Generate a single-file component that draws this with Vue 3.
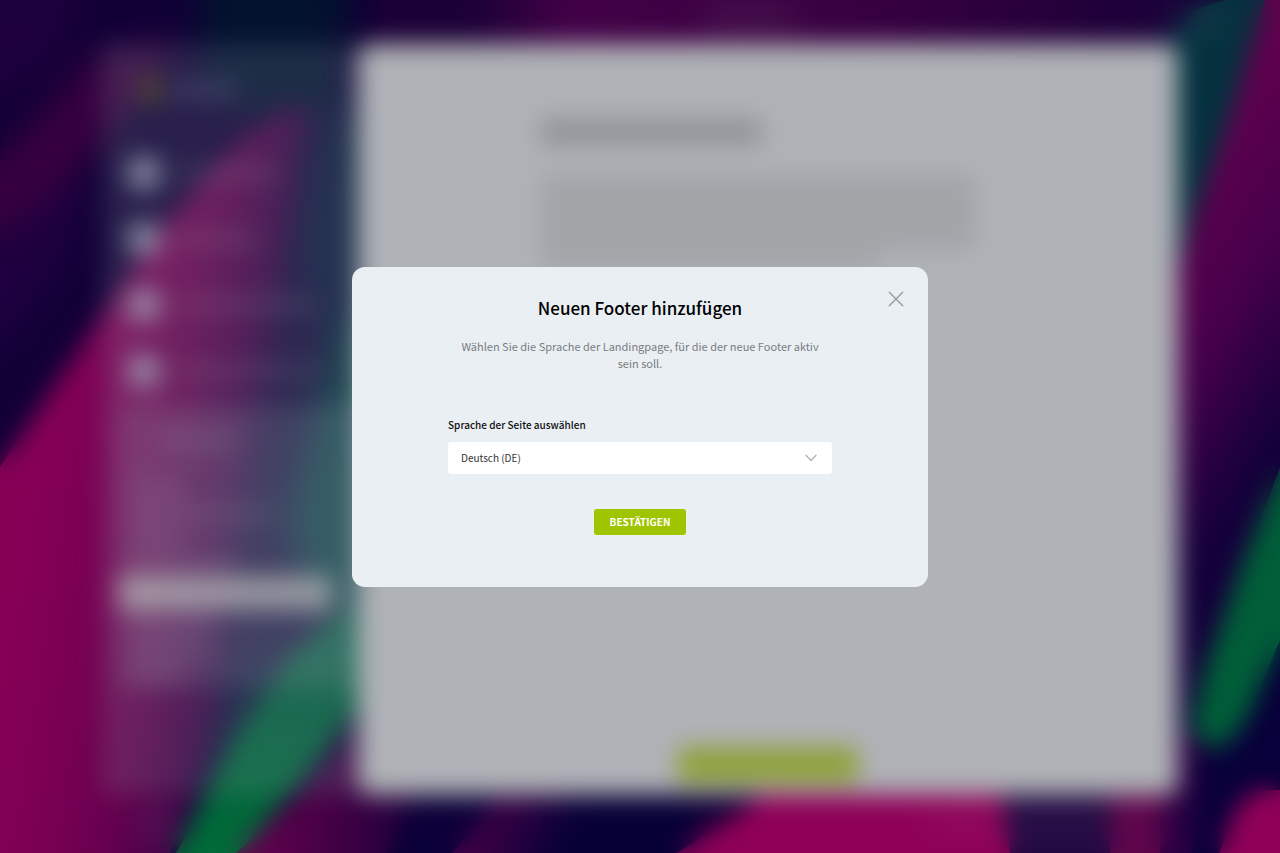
<script setup>
import { ref } from 'vue'

const language = ref('de')
const open = ref(true)

const navItems = [
  { id: 1, size: 'wide' },
  { id: 2, size: 'short' },
  { id: 3, size: 'long' },
  { id: 4, size: 'long' },
]
const subItems = [
  { id: 1, size: 'tiny' },
  { id: 2, size: 'long' },
  { id: 3, size: 'tiny' },
  { id: 4, size: 'wide' },
  { id: 5, size: 'wide', active: true },
  { id: 6, size: 'short' },
  { id: 7, size: 'short' },
  { id: 8, size: 'tiny' },
]
</script>

<template>
  <div class="page">
    <svg class="wallpaper" viewBox="0 0 1280 853" preserveAspectRatio="none" aria-hidden="true">
      <defs>
        <linearGradient id="top" x1="0" x2="1" y1="0" y2="0">
          <stop offset="0" stop-color="#1c0036" />
          <stop offset="0.14" stop-color="#420046" />
          <stop offset="0.6" stop-color="#36003f" />
          <stop offset="1" stop-color="#180038" />
        </linearGradient>
        <linearGradient id="rose" gradientUnits="userSpaceOnUse" x1="0" x2="225" y1="700" y2="734">
          <stop offset="0" stop-color="#860056" />
          <stop offset="0.35" stop-color="#760053" />
          <stop offset="0.6" stop-color="#62004d" />
          <stop offset="0.85" stop-color="#400046" />
          <stop offset="1" stop-color="#170a3c" />
        </linearGradient>
        <linearGradient id="leaf" gradientUnits="userSpaceOnUse" x1="200" x2="340" y1="850" y2="480">
          <stop offset="0" stop-color="#006c38" />
          <stop offset="0.5" stop-color="#00583c" />
          <stop offset="0.8" stop-color="#00503f" />
          <stop offset="1" stop-color="#043646" />
        </linearGradient>
        <linearGradient id="edge" gradientUnits="userSpaceOnUse" x1="1220" x2="1398" y1="130" y2="237">
          <stop offset="0" stop-color="#60004e" />
          <stop offset="0.5" stop-color="#45004a" />
          <stop offset="1" stop-color="#13003a" />
        </linearGradient>
        <linearGradient id="floor" gradientUnits="userSpaceOnUse" x1="250" x2="400" y1="0" y2="0">
          <stop offset="0" stop-color="#66004e" />
          <stop offset="1" stop-color="#26003d" />
        </linearGradient>
        <linearGradient id="stripe" gradientUnits="userSpaceOnUse" x1="480" x2="570" y1="800" y2="840">
          <stop offset="0" stop-color="#460047" />
          <stop offset="1" stop-color="#060036" />
        </linearGradient>
      </defs>
      <rect width="1280" height="853" fill="#110036" />
      <g class="soft">
        <path d="M-40 -40H100L60 60 -40 130Z" fill="#1d003c" />
        <path d="M-30 190 95 55 180 40 120 120 60 190 -30 260Z" fill="#38003f" />
        <path d="M-30 270 60 190 90 180 60 270 -30 390Z" fill="#1f0040" />
        <path d="M200 -40H350L340 120 240 110 200 70Z" fill="#03122f" />
      </g>
      <path d="M380 0H500V60H370Z" fill="#1c0036" />
      <path d="M470 0H1180L1140 60H470Z" fill="url(#top)" />
      <path d="M0 467 105 310 165 225 235 145 290 105 320 110 350 400 340 640 210 760 170 853H0Z" fill="url(#rose)" />
      <g class="soft">
        <path d="M325 110H390V340L330 350 305 250Z" fill="#0b1a3c" />
        <path d="M335 330 390 300V620L310 610 290 520Z" fill="#06363f" />
        <path d="M285 620 300 600 240 700 180 880H190L250 720Z" fill="#06363f" />
      </g>
      <path d="M176 853 235 740 290 655 370 590V690L310 770 240 853Z" fill="url(#leaf)" />
      <path d="M236 853 300 795 370 720 420 780 385 853Z" fill="url(#floor)" />
      <path d="M395 853 430 780H520L450 853Z" fill="#0b0039" />
      <path d="M452 853 515 780H690V853Z" fill="url(#stripe)" />
      <path d="M676 853 745 810 790 770H996L1012 853Z" fill="#8f0058" />
      <path d="M1010 853 1000 770H1118L1112 853Z" fill="#220942" />
      <path d="M1110 853V770H1180L1168 853Z" fill="#5f064c" />
      <path d="M1150 60 1195 10 1225 0H1272L1230 120 1185 260H1150Z" fill="#04303e" />
      <path d="M1265 0H1280V720H1150V400L1190 230 1232 110Z" fill="url(#edge)" />
      <path d="M1168 853 1180 720 1280 560V853Z" fill="#08003a" />
      <path d="M1160 853 1170 730H1200L1192 853Z" fill="#2c0042" />
      <path d="M1219 853 1235 810 1255 790H1280V853Z" fill="#900058" />
      <path d="M1280 468 1240 570 1205 670 1192 725Q1200 750 1222 748L1246 720 1280 640Z" fill="#005e38" />
      <g class="soft" fill="#a0b0b0">
        <rect x="705" y="12" width="95" height="18" opacity="0.14" />
        <rect x="1165" y="12" width="60" height="18" opacity="0.14" />
        <rect x="925" y="812" width="185" height="20" opacity="0.08" />
        <rect x="145" y="812" width="28" height="24" opacity="0.2" />
      </g>
    </svg>

    <div class="shell" aria-hidden="true">
      <aside class="sidebar">
        <div class="brand"><i class="mark"></i><i class="brand-line"></i></div>
        <div v-for="item in navItems" :key="item.id" class="nav-row">
          <i class="nav-icon"></i><i class="line" :class="item.size"></i>
        </div>
        <div class="submenu">
          <i class="line head short"></i>
          <div v-for="item in subItems" :key="item.id" class="sub-row" :class="{ active: item.active }">
            <i class="line" :class="item.size"></i>
          </div>
        </div>
      </aside>
      <main class="panel">
        <div class="article">
          <i class="headline"></i>
          <i class="copy"></i>
          <i class="copy last"></i>
        </div>
        <i class="action"></i>
      </main>
    </div>

    <div v-if="open" class="overlay">
      <section class="modal" role="dialog" aria-modal="true" aria-labelledby="modal-title">
        <button class="close" type="button" aria-label="Schließen" @click="open = false">
          <svg viewBox="0 0 16 16" width="16" height="16" fill="none" stroke="#9a9ea1" stroke-width="1.5" stroke-linecap="round">
            <path d="M1.3 1.3 14.7 14.7M14.7 1.3 1.3 14.7" />
          </svg>
        </button>
        <h1 id="modal-title">Neuen Footer hinzufügen</h1>
        <p>Wählen Sie die Sprache der Landingpage, für die der neue Footer aktiv sein soll.</p>
        <form @submit.prevent="open = false">
          <label for="language">Sprache der Seite auswählen</label>
          <div class="field">
            <select id="language" v-model="language">
              <option value="de">Deutsch (DE)</option>
            </select>
            <svg class="chevron" viewBox="0 0 12 8" width="12" height="8" fill="none" stroke="#b3b5b7" stroke-width="1.4" stroke-linecap="round" stroke-linejoin="round">
              <path d="M1 1.3 6 6.5 11 1.3" />
            </svg>
          </div>
          <button class="confirm" type="submit">BESTÄTIGEN</button>
        </form>
      </section>
    </div>
  </div>
</template>

<style>
body {
  margin: 0;
  background: #110036;
}
</style>

<style scoped>
.page {
  position: relative;
  min-height: 100vh;
  overflow: hidden;
  display: flex;
  font-family: "Noto Sans CJK SC", "Noto Sans", sans-serif;
}
.wallpaper {
  position: absolute;
  inset: 0;
  width: 100%;
  height: 100%;
}
.soft {
  filter: blur(12px);
}
.shell {
  position: relative;
  flex: 1;
  display: grid;
  grid-template-columns: 256px 1fr;
  margin: 44px 102px 58px;
}
.sidebar {
  box-sizing: border-box;
  padding-top: 28px;
  background: rgba(150, 170, 180, 0.18);
}
.brand {
  display: flex;
  align-items: center;
  gap: 8px;
  height: 36px;
  margin: 0 0 32px 36px;
}
.mark {
  width: 26px;
  height: 30px;
  border-radius: 50%;
  background: rgba(120, 110, 20, 0.45);
}
.brand-line {
  width: 64px;
  height: 18px;
  background: rgba(140, 160, 180, 0.22);
}
.nav-row {
  display: flex;
  align-items: center;
  gap: 16px;
  height: 66px;
  padding-left: 26px;
}
.nav-icon {
  width: 32px;
  height: 32px;
  border-radius: 6px;
  background: rgba(165, 175, 190, 0.7);
}
.line {
  display: block;
  height: 16px;
  background: rgba(170, 160, 180, 0.16);
}
.line.tiny { width: 50px; }
.line.short { width: 80px; }
.line.wide { width: 104px; }
.line.long { width: 140px; }
.submenu {
  display: flex;
  flex-direction: column;
  margin-left: 16px;
  padding: 26px 0 4px;
  background: rgba(150, 170, 175, 0.2);
}
.line.head {
  height: 20px;
  margin-left: 44px;
}
.sub-row {
  display: flex;
  align-items: center;
  height: 24px;
  margin-right: 26px;
  padding-left: 16px;
}
.head + .sub-row {
  margin-top: 28px;
}
.sub-row.active {
  height: 34px;
  margin-block: 2px;
  border-radius: 4px;
  background: rgba(180, 180, 180, 0.75);
}
.panel {
  display: flex;
  flex-direction: column;
  align-items: center;
  justify-content: space-between;
  box-sizing: border-box;
  padding: 74px 0 12px;
  border-radius: 12px;
  background: #afb2b7;
}
.article {
  display: flex;
  flex-direction: column;
  width: 456px;
}
.headline {
  width: 222px;
  height: 28px;
  margin-bottom: 28px;
  background: #919497;
}
.copy {
  width: 436px;
  height: 76px;
  background: #a1a5a8;
}
.copy.last {
  width: 340px;
  height: 18px;
}
.action {
  width: 180px;
  height: 36px;
  border-radius: 4px;
  background: #8da239;
}
.overlay {
  position: fixed;
  inset: 0;
  display: grid;
  place-items: center;
  backdrop-filter: blur(12px);
}
.modal {
  position: relative;
  box-sizing: border-box;
  width: 576px;
  max-width: 100%;
  padding: 29px 96px 52px;
  border-radius: 13px;
  background: #eaeff4;
  text-align: center;
}
.close {
  position: absolute;
  top: 24px;
  right: 24px;
  display: flex;
  padding: 0;
  border: 0;
  background: none;
  cursor: pointer;
}
h1 {
  margin: 0 0 18px;
  color: #000;
  font-size: 17px;
  font-weight: 500;
  line-height: 24px;
}
p {
  margin: 0 0 45px;
  padding: 0 12px;
  color: #797d80;
  font-size: 11px;
  line-height: 17px;
}
form {
  display: flex;
  flex-direction: column;
  align-items: center;
}
label {
  align-self: flex-start;
  margin-bottom: 9px;
  color: #111;
  font-size: 10px;
  font-weight: 500;
  line-height: 16px;
}
.field {
  position: relative;
  width: 100%;
  margin-bottom: 35px;
}
select {
  display: block;
  width: 100%;
  height: 32px;
  padding: 0 40px 0 13px;
  border: 0;
  border-radius: 3px;
  appearance: none;
  background: #fff;
  color: #333;
  font-family: inherit;
  font-size: 10px;
}
.chevron {
  position: absolute;
  top: 12px;
  right: 15px;
  pointer-events: none;
}
.confirm {
  height: 26px;
  padding: 0 16px;
  border: 0;
  border-radius: 3px;
  background: #9fc400;
  color: #fff;
  font-family: inherit;
  font-size: 10px;
  font-weight: 700;
  line-height: 16px;
  cursor: pointer;
}
</style>
